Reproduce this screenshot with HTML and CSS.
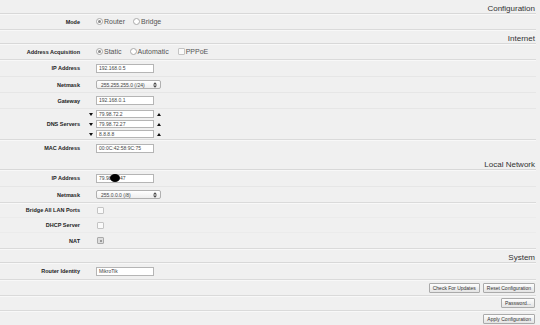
FILE: index.html
```html
<!DOCTYPE html>
<html lang="en">
<head>
    <meta charset="UTF-8">
    <title>Quick Set</title>
    <link rel="stylesheet" href="styles.css">
</head>
<body>
    <div class="form">
        <div class="section-head">Configuration</div>
        <div class="row">
            <div class="label">Mode</div>
            <div class="controls">
                <span class="radio checked"></span><span class="opt">Router</span>
                <span class="radio"></span><span class="opt">Bridge</span>
            </div>
        </div>

        <div class="section-head">Internet</div>
        <div class="row">
            <div class="label">Address Acquisition</div>
            <div class="controls">
                <span class="radio checked"></span><span class="opt">Static</span>
                <span class="radio"></span><span class="opt">Automatic</span>
                <span class="check"></span><span class="opt">PPPoE</span>
            </div>
        </div>
        <div class="row row-tall faint">
            <div class="label">IP Address</div>
            <div class="controls"><div class="input">192.168.0.5</div></div>
        </div>
        <div class="row faint">
            <div class="label">Netmask</div>
            <div class="controls">
                <div class="select">255.255.255.0 (/24)<span class="updown"><svg width="4" height="6" viewBox="0 0 4 6"><path d="M0 2.4L2 0.2L4 2.4Z M0 3.6L2 5.8L4 3.6Z" fill="#444"/></svg></span></div>
            </div>
        </div>
        <div class="row faint">
            <div class="label">Gateway</div>
            <div class="controls"><div class="input">192.168.0.1</div></div>
        </div>
        <div class="row row-dns">
            <div class="label">DNS Servers</div>
            <div class="controls dns-list">
                <div class="dns-line">
                    <span class="arrow"><svg width="4" height="3" viewBox="0 0 4 3"><path d="M0 0H4L2 3Z" fill="#111"/></svg></span>
                    <div class="input">79.98.72.2</div>
                    <span class="arrow"><svg width="4" height="3" viewBox="0 0 4 3"><path d="M0 3H4L2 0Z" fill="#111"/></svg></span>
                </div>
                <div class="dns-line">
                    <span class="arrow"><svg width="4" height="3" viewBox="0 0 4 3"><path d="M0 0H4L2 3Z" fill="#111"/></svg></span>
                    <div class="input">79.98.72.27</div>
                    <span class="arrow"><svg width="4" height="3" viewBox="0 0 4 3"><path d="M0 3H4L2 0Z" fill="#111"/></svg></span>
                </div>
                <div class="dns-line">
                    <span class="arrow"><svg width="4" height="3" viewBox="0 0 4 3"><path d="M0 0H4L2 3Z" fill="#111"/></svg></span>
                    <div class="input">8.8.8.8</div>
                    <span class="arrow"><svg width="4" height="3" viewBox="0 0 4 3"><path d="M0 3H4L2 0Z" fill="#111"/></svg></span>
                </div>
            </div>
        </div>
        <div class="row row-mac">
            <div class="label">MAC Address</div>
            <div class="controls"><div class="input">00:0C:42:58:9C:75</div></div>
        </div>

        <div class="section-head">Local Network</div>
        <div class="row row-tall faint">
            <div class="label">IP Address</div>
            <div class="controls"><div class="input">79.98<span class="blot"></span>.47</div></div>
        </div>
        <div class="row">
            <div class="label">Netmask</div>
            <div class="controls">
                <div class="select">255.0.0.0 (/8)<span class="updown"><svg width="4" height="6" viewBox="0 0 4 6"><path d="M0 2.4L2 0.2L4 2.4Z M0 3.6L2 5.8L4 3.6Z" fill="#444"/></svg></span></div>
            </div>
        </div>
        <div class="row row-short nolines">
            <div class="label">Bridge All LAN Ports</div>
            <div class="controls"><span class="check"></span></div>
        </div>
        <div class="row row-short nolines">
            <div class="label">DHCP Server</div>
            <div class="controls"><span class="check"></span></div>
        </div>
        <div class="row">
            <div class="label">NAT</div>
            <div class="controls"><span class="check checked"></span></div>
        </div>

        <div class="section-head">System</div>
        <div class="row row-tall">
            <div class="label">Router Identity</div>
            <div class="controls"><div class="input">MikroTik</div></div>
        </div>
        <div class="row actions">
            <button class="btn">Check For Updates</button>
            <button class="btn">Reset Configuration</button>
        </div>
        <div class="row row-short actions">
            <button class="btn">Password...</button>
        </div>
        <div class="row actions last">
            <button class="btn">Apply Configuration</button>
        </div>
    </div>
</body>
</html>
```

FILE: styles.css
```css
body {
    margin: 0;
    background: #f0f0f0;
    color: #222;
    font-family: "Liberation Sans", Arial, sans-serif;
}

.form {
    width: 536px;
}

.section-head {
    height: 14px;
    box-sizing: border-box;
    font-size: 8px;
    line-height: 6px;
    color: #333;
    display: flex;
    align-items: flex-end;
    justify-content: flex-end;
    padding: 0 1px 1px 0;
    border-bottom: 1px solid #d8d8d8;
    box-shadow: 0 1px 0 #f8f8f8;
}

.row {
    display: grid;
    grid-template-columns: 80px 1fr;
    column-gap: 16px;
    align-items: center;
    height: 16px;
    box-sizing: border-box;
    border-bottom: 1px solid #dadada;
    box-shadow: 0 1px 0 #f8f8f8;
}

.row.faint {
    border-bottom-color: #e6e6e6;
    box-shadow: none;
}

.row.nolines {
    border-bottom-color: #ebebeb;
    box-shadow: none;
}

.row-tall {
    height: 17px;
}

.row-short {
    height: 15px;
}

.row-dns {
    height: 31px;
}

.row-mac {
    border-bottom: none;
    box-shadow: none;
}

.label {
    text-align: right;
    font-weight: bold;
    font-size: 5.5px;
    color: #222;
    white-space: nowrap;
}

.controls {
    display: flex;
    align-items: center;
    font-size: 7px;
    color: #555;
}

.opt {
    margin: 0 8px 0 1px;
}

.radio {
    width: 5px;
    height: 5px;
    border: 1px solid #aaa;
    border-radius: 50%;
    background: #fff;
    display: inline-flex;
    align-items: center;
    justify-content: center;
}

.radio.checked::after {
    content: "";
    width: 3px;
    height: 3px;
    border-radius: 50%;
    background: #888;
}

.check {
    width: 5px;
    height: 5px;
    border: 1px solid #c4c4c4;
    border-radius: 1px;
    background: #fafafa;
    margin-left: 1px;
    display: inline-flex;
    align-items: center;
    justify-content: center;
}

.check.checked {
    background: #ddd;
    border-color: #aaa;
}

.check.checked::after {
    content: "";
    width: 2px;
    height: 2px;
    background: #999;
}

.input {
    width: 58px;
    height: 9px;
    box-sizing: border-box;
    border: 1px solid #b5b5b5;
    background: #fff;
    font-size: 5px;
    line-height: 7px;
    color: #444;
    padding-left: 2px;
    white-space: nowrap;
    display: flex;
    align-items: center;
}

.blot {
    display: inline-block;
    width: 10px;
    height: 8px;
    border-radius: 50%;
    background: #000;
    margin: 0 -1px 0 -2px;
}

.select {
    width: 65px;
    height: 9px;
    box-sizing: border-box;
    border: 1px solid #b0b0b0;
    border-radius: 2px;
    background: linear-gradient(#fff, #eee);
    font-size: 5px;
    color: #444;
    padding-left: 4px;
    display: flex;
    align-items: center;
    justify-content: space-between;
}

.updown {
    display: flex;
    padding-right: 3px;
}

.dns-list {
    flex-direction: column;
    align-items: flex-start;
    gap: 2px;
    margin-left: -10px;
}

.dns-line {
    display: flex;
    align-items: center;
    height: 8px;
}

.dns-line .input {
    height: 8px;
}

.arrow {
    width: 10px;
    display: flex;
    justify-content: center;
}

.actions {
    display: flex;
    justify-content: flex-end;
    gap: 3px;
    padding-right: 1px;
}

.actions.last {
    border-bottom: none;
    box-shadow: none;
}

.btn {
    font-family: "Liberation Sans", Arial, sans-serif;
    font-size: 5px;
    color: #333;
    height: 10px;
    padding: 0 3px;
    border: 1px solid #aaa;
    border-radius: 1px;
    background: linear-gradient(#fdfdfd, #e4e4e4);
    line-height: 8px;
}
```
